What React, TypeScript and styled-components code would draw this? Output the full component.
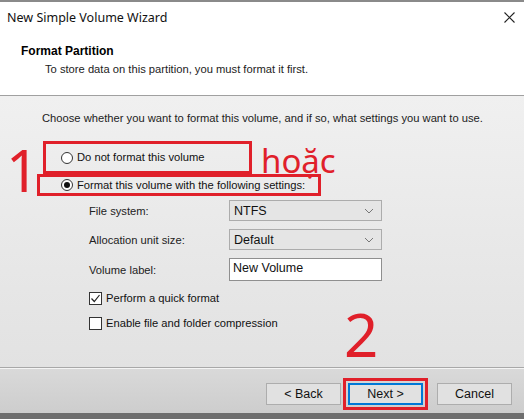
import React from "react";
import styled, { createGlobalStyle } from "styled-components";

const GlobalStyle = createGlobalStyle`
  html, body {
    margin: 0;
    padding: 0;
    background: #f0f0f0;
  }
  body {
    font-family: "Liberation Sans", Arial, sans-serif;
    font-size: 11.2px;
    color: #1a1a1a;
  }
`;

const Window = styled.div`
  position: relative;
  width: 524px;
  height: 419px;
  display: flex;
  flex-direction: column;
  overflow: hidden;
  background: #fff;
  border-top: 2px solid #8a8a8a;
  box-sizing: border-box;
`;

const TitleBar = styled.div`
  height: 31px;
  display: flex;
  align-items: center;
  justify-content: space-between;
  padding: 0 9px 0 7px;
  font-family: "Noto Sans", "Open Sans", sans-serif;
  font-size: 12.5px;
  color: #111;
`;

const CloseButton = styled.div`
  width: 12px;
  display: flex;
  justify-content: center;
  align-items: center;
`;

const Header = styled.div`
  height: 63px;
  padding: 11px 0 0 21px;
  box-sizing: border-box;
  border-bottom: 1px solid #a0a0a0;
  box-shadow: 0 1px 0 #fff;
`;

const HeaderTitle = styled.div`
  font-weight: bold;
  font-size: 12px;
  color: #000;
  line-height: 15px;
`;

const HeaderSub = styled.div`
  margin: 3px 0 0 24px;
  line-height: 15px;
  color: #222;
`;

const Body = styled.div`
  flex: 1;
  position: relative;
  padding: 15px 0 0 42px;
  background: linear-gradient(#f0f0f0, #e2e2e2);
  border-bottom: 1px solid #a8a8a8;
`;

const Intro = styled.div`
  line-height: 15px;
  color: #222;
`;

const Options = styled.div`
  margin-top: 15px;
  display: flex;
  flex-direction: column;
`;

const MarkBox = styled.div<{ $w: number; $h: number; $ml: number }>`
  width: ${(p) => p.$w}px;
  height: ${(p) => p.$h}px;
  margin-left: ${(p) => p.$ml}px;
  border: 3px solid #e0202a;
  box-sizing: border-box;
  display: flex;
  align-items: center;
`;

const RadioRow = styled.label<{ $pl: number }>`
  display: flex;
  align-items: center;
  gap: 4px;
  padding-left: ${(p) => p.$pl}px;
  line-height: 15px;
  white-space: nowrap;
  color: #111;
`;

const Radio = styled.span<{ $on?: boolean }>`
  width: 12px;
  height: 12px;
  border-radius: 50%;
  border: 1px solid #333;
  background: #fff;
  box-sizing: border-box;
  display: flex;
  align-items: center;
  justify-content: center;
  &::after {
    content: "";
    width: 6px;
    height: 6px;
    border-radius: 50%;
    background: ${(p) => (p.$on ? "#111" : "transparent")};
  }
`;

const Settings = styled.div`
  margin: 4px 0 0 47px;
  display: grid;
  grid-template-columns: 140px 153px;
  row-gap: 8px;
  align-items: center;
`;

const FieldLabel = styled.div`
  color: #222;
`;

const Select = styled.div`
  height: 21px;
  display: flex;
  align-items: center;
  justify-content: space-between;
  padding: 0 7px 0 4px;
  background: #e5e5e5;
  border: 1px solid #acacac;
  box-sizing: border-box;
  font-size: 12.5px;
  color: #111;
`;

const TextInput = styled.div`
  height: 23px;
  display: flex;
  align-items: center;
  padding: 0 3px 4px;
  background: #fff;
  border: 1px solid #8f8f8f;
  box-sizing: border-box;
  font-size: 12.5px;
  color: #111;
`;

const Checks = styled.div`
  margin: 10px 0 0 47px;
  display: flex;
  flex-direction: column;
  gap: 11px;
`;

const CheckRow = styled.label`
  display: flex;
  align-items: center;
  gap: 4px;
  line-height: 14px;
  color: #111;
`;

const CheckBox = styled.span`
  width: 13px;
  height: 13px;
  border: 1px solid #333;
  background: #fff;
  box-sizing: border-box;
  display: flex;
  align-items: center;
  justify-content: center;
`;

const Annotation = styled.div<{ $x: number; $y: number; $size: number }>`
  position: absolute;
  left: ${(p) => p.$x}px;
  top: ${(p) => p.$y}px;
  font-family: "Noto Sans", "Open Sans", sans-serif;
  font-size: ${(p) => p.$size}px;
  line-height: 1;
  color: #e0202a;
`;

const Footer = styled.div`
  height: 45px;
  display: flex;
  align-items: flex-start;
  justify-content: flex-end;
  gap: 7px;
  padding: 14px 12px 0 0;
  box-sizing: border-box;
  background: linear-gradient(#d9d9d9, #cdcdcd);
  border-top: 1px solid #f4f4f4;
`;

const Button = styled.div<{ $primary?: boolean; $marked?: boolean; $spaced?: boolean }>`
  width: 75px;
  height: 22px;
  display: flex;
  align-items: center;
  justify-content: center;
  margin-left: ${(p) => (p.$spaced ? 7 : 0)}px;
  background: #e1e1e1;
  border: 1px solid ${(p) => (p.$primary ? "#0078d7" : "#adadad")};
  box-shadow: ${(p) => (p.$primary ? "inset 0 0 0 1px #0078d7" : "none")};
  outline: ${(p) => (p.$marked ? "3px solid #e0202a" : "none")};
  outline-offset: 2px;
  box-sizing: border-box;
  font-size: 12.5px;
  color: #111;
`;

const BottomStrip = styled.div`
  height: 6px;
  background: #6e6e6e;
`;

const Chevron = () => (
  <svg width="10" height="6" viewBox="0 0 10 6">
    <path d="M1 1l4 4 4-4" fill="none" stroke="#777" strokeWidth="1" />
  </svg>
);

export default function App() {
  return (
    <>
      <GlobalStyle />
      <Window>
        <TitleBar>
          <span>New Simple Volume Wizard</span>
          <CloseButton>
            <svg width="11" height="11" viewBox="0 0 11 11">
              <path d="M0.5 0.5l10 10M10.5 0.5l-10 10" stroke="#222" strokeWidth="1.1" />
            </svg>
          </CloseButton>
        </TitleBar>
        <Header>
          <HeaderTitle>Format Partition</HeaderTitle>
          <HeaderSub>To store data on this partition, you must format it first.</HeaderSub>
        </Header>
        <Body>
          <Intro>
            Choose whether you want to format this volume, and if so, what settings you want to use.
          </Intro>
          <Options>
            <MarkBox $w={209} $h={33} $ml={1}>
              <RadioRow $pl={15}>
                <Radio />
                Do not format this volume
              </RadioRow>
            </MarkBox>
            <MarkBox $w={284} $h={22} $ml={-5}>
              <RadioRow $pl={21}>
                <Radio $on />
                Format this volume with the following settings:
              </RadioRow>
            </MarkBox>
          </Options>
          <Settings>
            <FieldLabel>File system:</FieldLabel>
            <Select>
              NTFS
              <Chevron />
            </Select>
            <FieldLabel>Allocation unit size:</FieldLabel>
            <Select>
              Default
              <Chevron />
            </Select>
            <FieldLabel>Volume label:</FieldLabel>
            <TextInput>New Volume</TextInput>
          </Settings>
          <Checks>
            <CheckRow>
              <CheckBox>
                <svg width="11" height="11" viewBox="0 0 11 11">
                  <path d="M1.5 5.5l2.8 3L9.5 2" fill="none" stroke="#222" strokeWidth="1.2" />
                </svg>
              </CheckBox>
              Perform a quick format
            </CheckRow>
            <CheckRow>
              <CheckBox />
              Enable file and folder compression
            </CheckRow>
          </Checks>
          <Annotation $x={6} $y={45} $size={58}>1</Annotation>
          <Annotation $x={261} $y={48} $size={33}>hoặc</Annotation>
          <Annotation $x={344} $y={208} $size={60}>2</Annotation>
        </Body>
        <Footer>
          <Button>&lt; Back</Button>
          <Button $primary $marked>Next &gt;</Button>
          <Button $spaced>Cancel</Button>
        </Footer>
        <BottomStrip />
      </Window>
    </>
  );
}
